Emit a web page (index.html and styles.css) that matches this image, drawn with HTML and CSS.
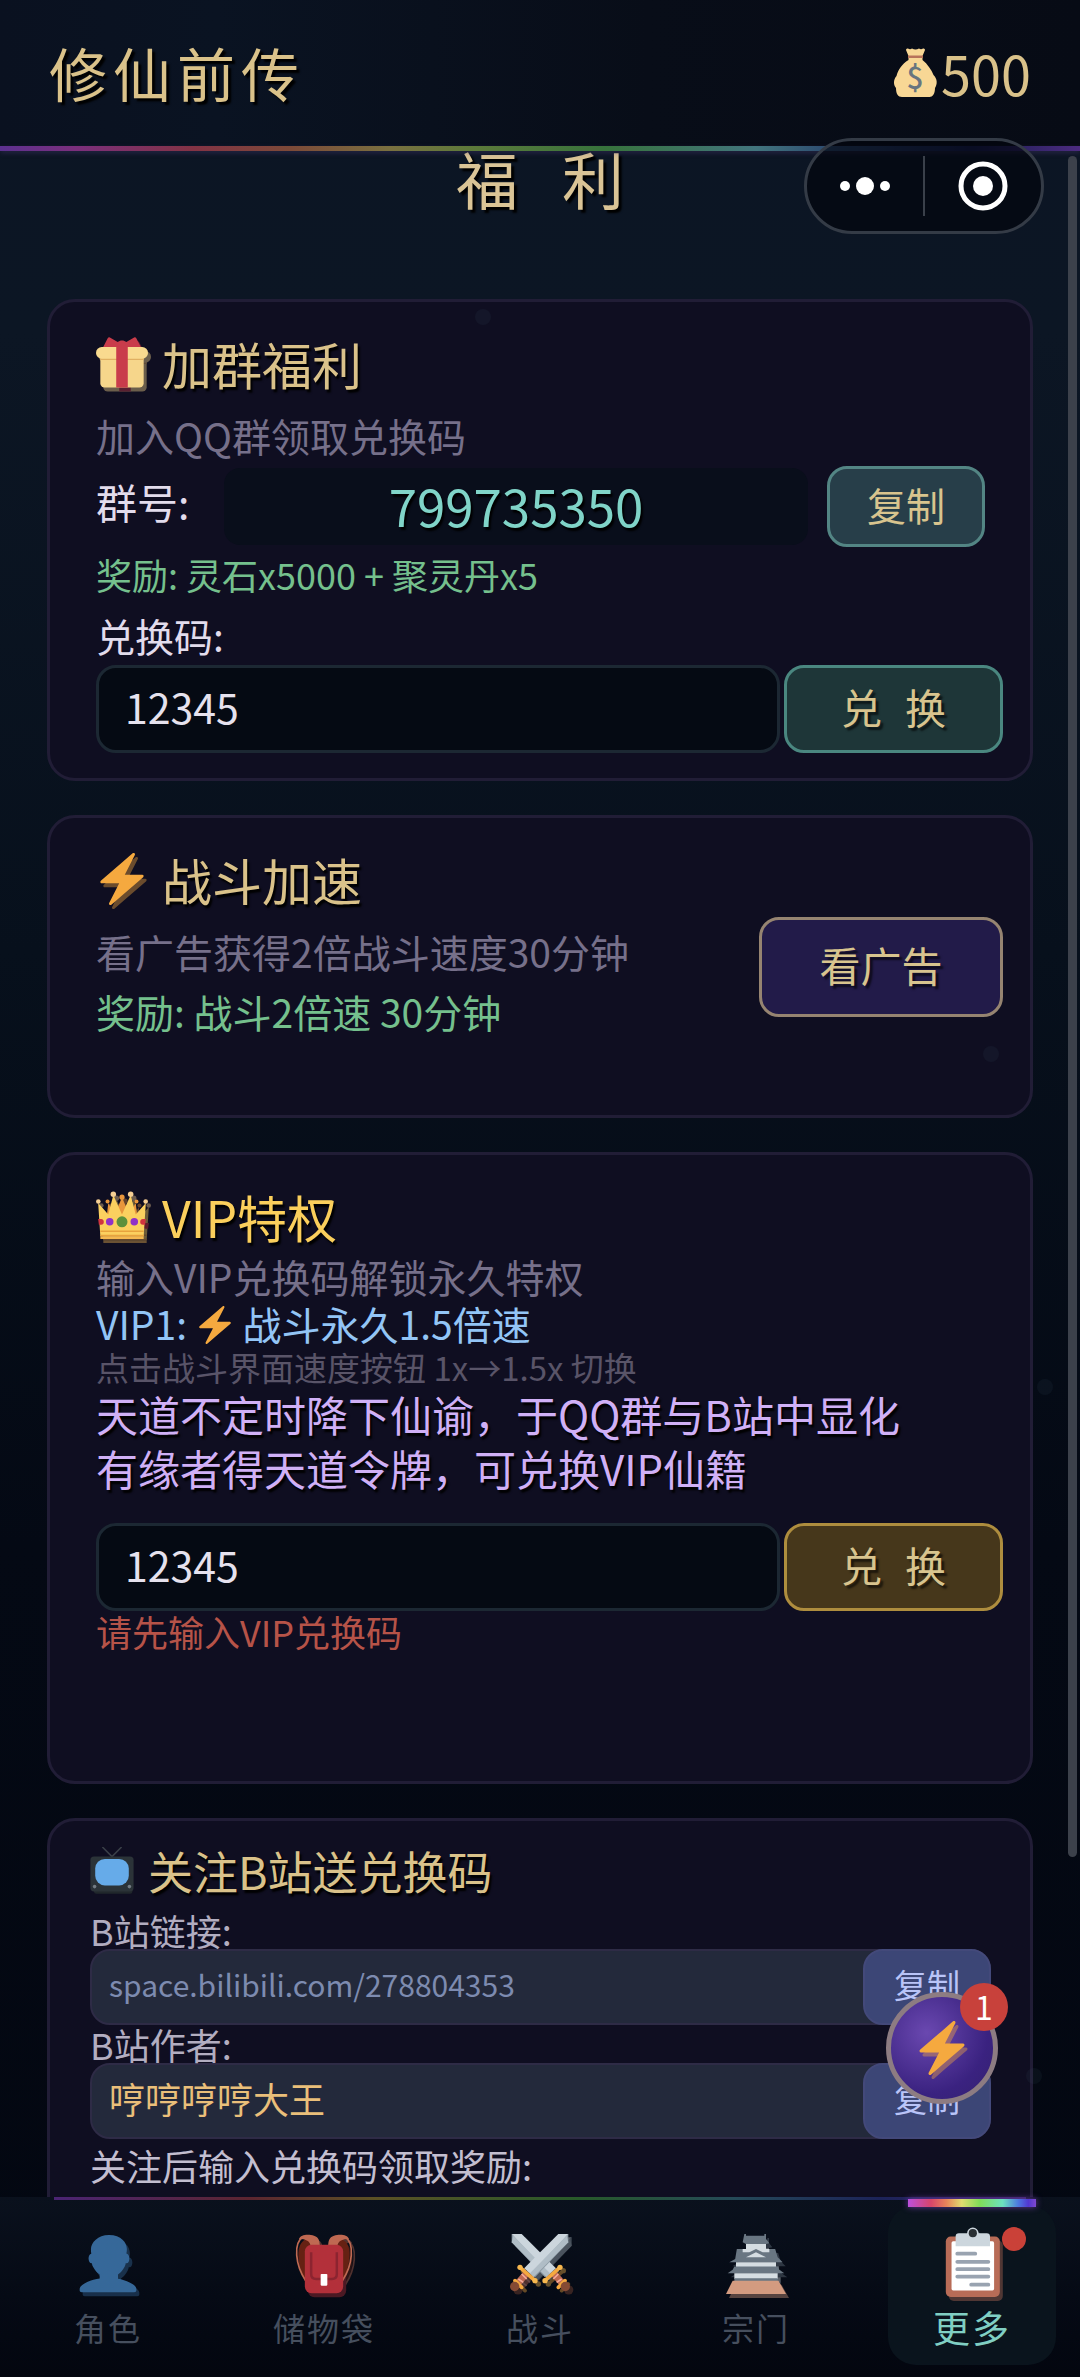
FILE: index.html
```
<!DOCTYPE html>
<html lang="zh-CN">
<head>
    <meta charset="UTF-8">
    <meta name="viewport" content="width=device-width, initial-scale=1.0">
    <title>修仙前传</title>
    <link rel="stylesheet" href="styles.css">
</head>
<body>
    <!-- shared icons -->
    <svg class="sprite" aria-hidden="true">
        <symbol id="bolt" viewBox="0 0 36 36">
            <path fill="#f5a93f" d="M32.938 15.651C32.792 15.26 32.418 15 32 15H19.925L26.89 1.458c.219-.426.106-.947-.271-1.243C26.437.071 26.218 0 26 0c-.233 0-.466.082-.653.243L18 6.588 3.347 19.243c-.316.273-.43.714-.284 1.105S3.582 21 4 21h12.075L9.11 34.542c-.219.426-.106.947.271 1.243.182.144.401.215.619.215.233 0 .466-.082.653-.243L18 29.412l14.653-12.655c.317-.273.43-.714.285-1.106z"/>
        </symbol>
        <symbol id="gift" viewBox="0 0 36 36">
            <path fill="#f6d68b" d="M3 12h30v20a3 3 0 0 1-3 3H6a3 3 0 0 1-3-3z"/>
            <path fill="#e0b062" d="M3 14h30v2H3z"/>
            <rect fill="#f9da8f" y="7" width="36" height="8" rx="4"/>
            <path fill="#c93c4b" d="M14 6h8v29h-8z"/>
            <path fill="#c93c4b" d="M5 7 8 1c.6-1 1.400-1 2.200-.3L15 3.500c1.500-1.500 4.500-1.500 6 0l4.800-2.800c.8-.7 1.600-.7 2.200.3l3 6z"/>
        </symbol>
        <symbol id="crown" viewBox="0 0 36 36">
            <path fill="#e8963c" d="M7 22 8.500 9l4.500 8 5-12 5 12 4.500-8L29 22z"/>
            <path fill="#fbd05f" d="M3 32 1.500 9l7 8L12 3.500 18 17l6-13.500L27.500 17l7-8L33 32z"/>
            <g fill="#f5cf94">
                <circle cx="1.600" cy="8" r="1.600"/><circle cx="12" cy="3" r="1.900"/><circle cx="24" cy="3" r="1.900"/><circle cx="34.400" cy="8" r="1.600"/>
            </g>
            <g fill="#e8963c">
                <circle cx="8" cy="8" r="1.400"/><circle cx="18" cy="5" r="1.800"/><circle cx="28" cy="8" r="1.400"/>
            </g>
            <path fill="#e8a33d" d="M3 28h30v1H3zM3 31h30v1H3z"/>
            <path fill="#f5b850" d="M3 32h30v2H3z"/>
            <circle fill="#5c913b" cx="18" cy="22" r="3.800"/>
            <circle fill="#9031c7" cx="9.500" cy="22" r="2.600"/><circle fill="#9031c7" cx="26.500" cy="22" r="2.600"/>
            <path fill="#d0343f" d="M1.500 20h1.800a2 2 0 0 1 .2 4H2zM34.500 20h-1.800a2 2 0 0 0-.2 4H34z"/>
        </symbol>
        <symbol id="tv" viewBox="0 0 36 40">
            <path fill="none" stroke="#3a3f48" stroke-width="1.300" d="m18 8-8-8M18 8l8-8"/>
            <path fill="#20272b" d="M3 34h32v3q0 2-2 2H5q-2 0-2-2z"/>
            <rect fill="#2b3338" y="8" width="36" height="29" rx="3"/>
            <rect fill="#66abe9" x="4" y="10" width="28" height="22" rx="8"/>
            <circle fill="#737c83" cx="3.500" cy="33" r="1.500"/><circle fill="#737c83" cx="32.500" cy="33" r="1.500"/>
        </symbol>
        <symbol id="person" viewBox="0 0 36 36">
            <path fill="#366899" d="M24 26.799v-2.566c2-1.348 4.080-3.779 4.703-6.896.186.103.206.17.413.17.991 0 1.709-1.287 1.709-2.873 0-1.562-.823-2.827-1.794-2.865.187-.674.293-1.577.293-2.735C29.324 5.168 26 .527 18.541.527c-6.629 0-10.777 4.641-10.777 8.507 0 1.123.069 2.043.188 2.755-.911.137-1.629 1.352-1.629 2.845 0 1.587.804 2.873 1.796 2.873.206 0 .025-.067.209-.17C8.952 20.453 11 22.885 13 24.232v2.414c-5 .645-12 3.437-12 6.230v1.061C1 35 2.076 35 3.137 35h29.725C33.924 35 35 35 35 33.938v-1.061c0-2.615-6-5.225-11-6.078z"/>
        </symbol>
        <symbol id="bag" viewBox="0 0 36 36">
            <path fill="#662113" d="M8 3C0 5 2 19 7 29l4-1V8zM28 3c8 2 6 16 1 26l-4-1V8z"/>
            <path fill="none" stroke="#bf6952" stroke-width="1" d="M7 28C1 19-1 5 6 1.500M29 28c6-9 8-23 1-26.500"/>
            <path fill="#bf6952" d="M3 3c1-3 6-3 9-2 3 1 3.500 3 3.500 7H10c0-4-3-5-7-5zM33 3c-1-3-6-3-9-2-3 1-3.500 3-3.500 7H26c0-4 3-5 7-5z"/>
            <rect fill="#b3303a" x="6.500" y="6.500" width="23" height="29" rx="4"/>
            <path fill="none" stroke="#8c2430" stroke-width="1.500" d="M10.300 11v13q0 3 3 3h9.400q3 0 3-3V11"/>
            <rect fill="#fff" x="16" y="24" width="4" height="7" rx=".5"/>
        </symbol>
        <symbol id="swords" viewBox="0 0 36 36">
            <g id="sword">
                <path fill="#8d9ba5" d="M35 0v5L15 26l-5-4z"/>
                <path fill="#ccd6dd" d="M29 0h6L12.500 24 8.500 20.500z"/>
                <path fill="#b0bdc6" d="m35 5-21 21-2-2.500L34 1z"/>
                <path stroke="#bf6952" stroke-width="4" d="m9.500 24-6 7"/>
                <path stroke="#f4ab9a" stroke-width="1" d="m7 24 3 3M5 27l3 2"/>
                <path stroke="#f5a93f" stroke-width="2.200" stroke-linecap="round" d="m6 20 9 8M3 28l4 4"/>
                <circle fill="#f7b84f" cx="6" cy="20" r="1.600"/><circle fill="#f7b84f" cx="15" cy="28" r="1.600"/>
                <circle fill="#854a34" cx="2.800" cy="31.500" r="2.800"/>
            </g>
        </symbol>
        <symbol id="castle" viewBox="0 0 36 36">
            <path fill="#697682" d="M11 0h1v1h11V0h1v3l2 2.500-2 .5H12l-2-1z"/>
            <path fill="#d5dde2" d="M12 6h12v5H12z"/>
            <path fill="#697682" d="M6.500 9h23L31 14l3 3H2l3.500-2z"/>
            <path fill="#d5dde2" d="M10 9h16v2h-4l-4-2-4 2h-4z"/>
            <path fill="#d5dde2" d="m12 14 6-3 6 3z"/>
            <path fill="#d5dde2" d="M6 17h24v3H6z"/>
            <path fill="#697682" d="M5 19.500h26l1 2 3 2H1l3-2z"/>
            <path fill="#d5dde2" d="M5 23.500h26V27H5z"/>
            <path fill="#697682" d="M5 26.500h26V29H5z"/>
            <path fill="#d39b80" d="M4 28h27.500L36 36H0z"/>
        </symbol>
        <symbol id="clipboard" viewBox="0 0 36 44">
            <rect fill="#b86c57" x="2" y="7" width="33" height="37" rx="3"/>
            <rect fill="#fff" x="5.500" y="10" width="26" height="30" rx="1"/>
            <path fill="#ccd6dd" d="M8 13V7a2 2 0 0 1 2-2h5a3.500 3.500 0 1 1 7 0h5a2 2 0 0 1 2 2v6z"/>
            <circle fill="#292f33" cx="18.500" cy="5" r="2.500"/>
            <path stroke="#99a3b0" stroke-width="2.300" stroke-linecap="round" d="M9 17.500h11M9 22.500h19M9 27h19M9 31.500h19M17.500 36.500H28"/>
        </symbol>
    </svg>

    <header class="topbar">
        <h1 class="game-name">修仙前传</h1>
        <div class="coins">
            <svg class="money" viewBox="0 0 43 49" aria-hidden="true">
                <path fill="#f8d795" d="M12 2q0-2 2-1.500 2 1.500 4 0 3.500 2 7 0 2 1.500 4 0 2-.5 2 1.500l-2.500 6v4c5 4 9 10 11 15 4 4 4 9 1.500 13 0 6-2.500 9-5.500 9H8c-4 0-6-3-6-9-2.500-3-3-8 .5-12C4 22 8 16 14.500 12V8z"/>
                <path fill="#b8735a" d="M14 7.500h15v2.500H14z"/>
                <text x="21" y="41" text-anchor="middle">$</text>
            </svg>
            <span>500</span>
        </div>
    </header>

    <main class="content">
        <h2 class="page-title">福 利</h2>

        <section class="card">
            <h3 class="card-title">
                <svg class="icon" aria-hidden="true"><use class="ghost" href="#gift" x="3" y="4"/><use href="#gift"/></svg>
                加群福利
            </h3>
            <p class="desc">加入QQ群领取兑换码</p>
            <div class="group-row">
                <span class="group-label">群号:</span>
                <span class="group-number">799735350</span>
                <button class="btn btn-copy" type="button">复制</button>
            </div>
            <p class="reward small">奖励: 灵石x5000 + 聚灵丹x5</p>
            <label class="code-label" for="groupCode">兑换码:</label>
            <div class="code-row">
                <input class="code-input" type="text" id="groupCode" value="12345">
                <button class="btn btn-redeem" type="button">兑 换</button>
            </div>
        </section>

        <section class="card speed-card">
            <div class="speed-info">
                <h3 class="card-title">
                    <svg class="icon" aria-hidden="true"><use class="ghost" href="#bolt" x="3" y="4"/><use href="#bolt"/></svg>
                    战斗加速
                </h3>
                <p class="desc">看广告获得2倍战斗速度30分钟</p>
                <p class="reward">奖励: 战斗2倍速 30分钟</p>
            </div>
            <button class="btn btn-ad" type="button">看广告</button>
        </section>

        <section class="card vip-card">
            <h3 class="card-title vip-title">
                <svg class="icon" aria-hidden="true"><use class="ghost" href="#crown" x="3" y="4"/><use href="#crown"/></svg>
                VIP特权
            </h3>
            <p class="vip-desc">输入VIP兑换码解锁永久特权</p>
            <p class="vip-level">VIP1: <svg class="icon-inline" aria-hidden="true"><use href="#bolt"/></svg> 战斗永久1.5倍速</p>
            <p class="vip-hint">点击战斗界面速度按钮 1x→1.5x 切换</p>
            <p class="oracle">天道不定时降下仙谕，于QQ群与B站中显化<br>有缘者得天道令牌，可兑换VIP仙籍</p>
            <div class="code-row">
                <input class="code-input" type="text" id="vipCode" value="12345" aria-label="VIP兑换码">
                <button class="btn btn-redeem btn-gold" type="button">兑 换</button>
            </div>
            <p class="error">请先输入VIP兑换码</p>
        </section>

        <section class="card bili-card">
            <h3 class="card-title bili-title">
                <svg class="icon" aria-hidden="true"><use href="#tv"/></svg>
                关注B站送兑换码
            </h3>
            <p class="bili-label">B站链接:</p>
            <div class="bili-row">
                <a class="bili-link" href="https://space.bilibili.com/278804353">space.bilibili.com/278804353</a>
                <button class="btn-bili" type="button">复制</button>
            </div>
            <p class="bili-label">B站作者:</p>
            <div class="bili-row">
                <span class="bili-author">哼哼哼哼大王</span>
                <button class="btn-bili" type="button">复制</button>
            </div>
            <p class="bili-tip">关注后输入兑换码领取奖励:</p>
        </section>

        <div class="scrollbar"></div>
    </main>

    <nav class="tabs">
        <a class="tab" href="#role">
            <svg class="tab-icon" aria-hidden="true"><use class="ghost" href="#person" x="3" y="4"/><use href="#person"/></svg>
            <span>角色</span>
        </a>
        <a class="tab" href="#storage">
            <svg class="tab-icon" aria-hidden="true"><use class="ghost" href="#bag" x="3" y="4"/><use href="#bag"/></svg>
            <span>储物袋</span>
        </a>
        <a class="tab" href="#battle">
            <svg class="tab-icon" viewBox="0 0 36 36" aria-hidden="true">
                <g class="ghost"><use href="#sword" transform="translate(38 2) scale(-1 1)"/><use href="#sword" x="2" y="2"/></g>
                <use href="#sword" transform="translate(36 0) scale(-1 1)"/><use href="#sword"/>
            </svg>
            <span>战斗</span>
        </a>
        <a class="tab" href="#sect">
            <svg class="tab-icon" aria-hidden="true"><use class="ghost" href="#castle" x="3" y="4"/><use href="#castle"/></svg>
            <span>宗门</span>
        </a>
        <a class="tab active" href="#more">
            <svg class="tab-icon" aria-hidden="true"><use class="ghost" href="#clipboard" x="3" y="4"/><use href="#clipboard"/></svg>
            <span>更多</span>
            <i class="dot"></i>
        </a>
    </nav>

    <!-- drifting spirit motes -->
    <div class="motes" aria-hidden="true">
        <i style="left: 44%; top: 13%"></i>
        <i style="left: 96%; top: 58%"></i>
        <i style="left: 91%; top: 44%"></i>
        <i style="left: 95%; top: 87%"></i>
    </div>

    <!-- mini program capsule -->
    <div class="capsule">
        <button type="button" aria-label="菜单">
            <svg width="52" height="20" viewBox="0 0 52 20"><g fill="#fff"><circle cx="6" cy="10" r="5"/><circle cx="26" cy="10" r="9"/><circle cx="46" cy="10" r="5"/></g></svg>
        </button>
        <button type="button" aria-label="关闭">
            <svg width="50" height="50" viewBox="0 0 50 50"><circle cx="25" cy="25" r="22" fill="none" stroke="#fff" stroke-width="5"/><circle cx="25" cy="25" r="10" fill="#fff"/></svg>
        </button>
    </div>

    <button class="fab" type="button" aria-label="加速">
        <svg class="fab-icon" aria-hidden="true"><use class="ghost" href="#bolt" x="3" y="4"/><use href="#bolt"/></svg>
        <span class="badge">1</span>
    </button>
</body>
</html>
```
FILE: styles.css
```
* {
    box-sizing: border-box;
}
body {
    font-family: "Noto Sans CJK SC", "Noto Sans", sans-serif;
    margin: 0;
    height: 100vh;
    display: flex;
    flex-direction: column;
    position: relative;
    overflow: hidden;
    background: linear-gradient(#0c1524 0%, #0c1624 14%, #07101c 40%, #040914 65%, #030711 100%);
    color: #e2dcec;
}
h1, h2, h3, p {
    margin: 0;
    font-weight: 400;
}
button, input {
    font-family: inherit;
    margin: 0;
}
button {
    cursor: pointer;
}
a {
    text-decoration: none;
}
.sprite {
    position: absolute;
    width: 0;
    height: 0;
}
svg {
    overflow: visible;
    flex: none;
}
.ghost {
    opacity: 0.4;
}

/* top bar */
.topbar {
    display: flex;
    justify-content: space-between;
    align-items: center;
    height: 148px;
    padding: 0 49px 4px;
    flex: none;
    position: relative;
    z-index: 1;
    background: linear-gradient(90deg, #0a1120, #0a1322 20%, #080d18 60%, #070b15);
}
.topbar::after {
    content: "";
    position: absolute;
    left: 0;
    right: 0;
    bottom: -3px;
    height: 5px;
    background: linear-gradient(90deg, #5c3190, #7b2f7c 7%, #833344 18%, #7c4a38 27%, #7a7040 36%, #5c7a3a 44%, #37733c 56%, #42757e 70%, #2c4a70 77%, #171d4e 90%, #4c2b80);
    box-shadow: 0 2px 5px rgba(80, 60, 120, 0.4);
}
.game-name {
    font-size: 58px;
    letter-spacing: 6px;
    color: #dac28a;
    text-shadow: 3px 3px 2px #000;
}
.coins {
    display: flex;
    align-items: center;
    font-size: 54px;
    color: #dac28a;
}
.money {
    width: 43px;
    height: 49px;
    margin-right: 4px;
}
.money text {
    font-size: 30px;
    font-weight: 500;
    fill: #67757f;
}

/* content */
.content {
    flex: 1;
    min-height: 0;
    overflow: hidden;
    position: relative;
    padding: 0 47px;
}
.page-title {
    font-size: 62px;
    line-height: 60px;
    letter-spacing: 15px;
    text-indent: 15px;
    text-align: center;
    color: #dac496;
    text-shadow: 3px 3px 2px #000;
    margin-bottom: 91px;
}
.scrollbar {
    position: absolute;
    top: 8px;
    right: 3px;
    width: 9px;
    height: 83%;
    border-radius: 5px;
    background: #3c414b;
}
.card {
    border: 3px solid #211d36;
    border-radius: 28px;
    background: #0f0e21;
    padding: 31px 27px 25px 46px;
    margin-bottom: 34px;
}
.card-title {
    display: flex;
    align-items: center;
    gap: 14px;
    font-size: 50px;
    line-height: 60px;
    color: #dac28a;
    text-shadow: 2px 3px 2px #000;
    margin-bottom: 17px;
}
.icon {
    width: 52px;
    height: 52px;
}
.desc {
    font-size: 39px;
    line-height: 50px;
    color: #76708a;
}
.reward {
    font-size: 39px;
    line-height: 50px;
    color: #75c08d;
}
.reward.small {
    font-size: 36px;
    margin-top: 2px;
}
.btn {
    border: 3px solid;
    border-radius: 20px;
    padding: 0 0 6px;
    color: #d8c48e;
    text-shadow: 3px 3px 2px rgba(0, 0, 0, 0.6);
    flex: none;
}
.group-row {
    display: flex;
    margin: 6px 18px 0 0;
}
.group-label {
    width: 128px;
    font-size: 41px;
    line-height: 70px;
}
.group-number {
    flex: 1;
    margin: 2px 19px 2px 0;
    border-radius: 16px;
    background: #090e1b;
    font-size: 51px;
    line-height: 75px;
    text-align: center;
    color: #80d4c8;
    text-shadow: 2px 3px 2px #000;
}
.btn-copy {
    width: 158px;
    height: 81px;
    font-size: 39px;
    background: #273e49;
    border-color: #538584;
    text-shadow: none;
}
.code-label {
    display: block;
    font-size: 39px;
    line-height: 60px;
    margin-top: 6px;
}
.code-row {
    display: flex;
    gap: 4px;
}
.code-input {
    flex: 1;
    min-width: 0;
    height: 88px;
    border: 3px solid #1c2833;
    border-radius: 20px;
    background: #050a13;
    color: #e6e2ee;
    font-size: 41px;
    padding: 0 26px 6px;
    outline: none;
}
.btn-redeem {
    width: 219px;
    height: 88px;
    font-size: 41px;
    letter-spacing: 7px;
    text-indent: 7px;
    background: #1e3638;
    border-color: #4a8780;
}
.btn-gold {
    background: #46371b;
    border-color: #ae8d3e;
}

/* battle speed */
.speed-card {
    display: flex;
    justify-content: space-between;
    align-items: center;
    padding-bottom: 31px;
}
.speed-info {
    padding-bottom: 48px;
}
.speed-info .reward {
    margin-top: 10px;
}
.btn-ad {
    width: 244px;
    height: 100px;
    font-size: 41px;
    background: #221b49;
    border-color: #968471;
}

/* vip */
.vip-card {
    padding-bottom: 130px;
}
.vip-title {
    color: #fbcf5c;
    margin-bottom: 7px;
}
.vip-desc {
    font-size: 39px;
    line-height: 46px;
    color: #76708a;
}
.vip-level {
    font-size: 39px;
    line-height: 48px;
    color: #93c5f6;
}
.icon-inline {
    width: 38px;
    height: 38px;
    vertical-align: -4px;
}
.vip-hint {
    font-size: 33px;
    line-height: 40px;
    color: #595468;
}
.oracle {
    font-size: 42px;
    line-height: 54px;
    color: #d0b0f6;
    text-shadow: 2px 3px 2px #000;
    margin-bottom: 28px;
}
.error {
    font-size: 36px;
    line-height: 40px;
    color: #b65348;
}

/* bilibili */
.bili-card {
    padding: 23px 39px 120px 40px;
}
.bili-title {
    font-size: 45px;
    line-height: 54px;
    margin-bottom: 13px;
}
.bili-title .icon {
    width: 44px;
    height: 48px;
}
.bili-label {
    font-size: 36px;
    line-height: 38px;
    color: #b2adc0;
}
.bili-row {
    display: flex;
    align-items: center;
    justify-content: space-between;
    height: 76px;
    border: 2px solid #2e2b46;
    border-radius: 20px;
    background: #23293b;
    padding-left: 17px;
}
.bili-link,
.bili-author {
    padding-bottom: 6px;
}
.bili-link {
    font-size: 30px;
    color: #7d8bb0;
}
.bili-author {
    font-size: 36px;
    color: #eabf7a;
}
.btn-bili {
    width: 128px;
    height: 76px;
    margin-right: -2px;
    border: 2px solid #43497a;
    border-radius: 20px;
    padding: 0 0 6px;
    background: #3c4676;
    color: #b9c4f8;
    font-size: 33px;
}
.bili-tip {
    font-size: 36px;
    line-height: 52px;
    color: #c3bed0;
}

/* bottom tabs */
.tabs {
    display: grid;
    grid-template-columns: repeat(5, 1fr);
    height: 180px;
    flex: none;
    position: relative;
    background: linear-gradient(#0a111d, #050a15 55%, #03060f);
}
.tabs::before {
    content: "";
    position: absolute;
    left: 5%;
    right: 5%;
    top: 0;
    height: 3px;
    background: linear-gradient(90deg, #4b2474, #5c2530 20%, #5c5125 33%, #285a2a 54%, #254a58 70%, #1c2358 85%, #3a2268);
}
.tab {
    display: flex;
    flex-direction: column;
    align-items: center;
    position: relative;
    margin: 8px 24px 12px;
    padding-top: 28px;
    border-radius: 28px;
    color: #464f5e;
    font-size: 32px;
    line-height: 40px;
    letter-spacing: 2px;
}
.tab-icon {
    width: 60px;
    height: 62px;
    margin-bottom: 12px;
}
.tab.active {
    background: #0a141d;
    color: #80cfc3;
    font-size: 37px;
    padding-top: 20px;
}
.tab.active .tab-icon {
    height: 72px;
    margin-bottom: 10px;
}
.tab.active::before {
    content: "";
    position: absolute;
    top: -6px;
    left: 20px;
    right: 20px;
    height: 8px;
    background: linear-gradient(90deg, #bb50dd, #d8456a 18%, #e8835a 30%, #e0dc70 42%, #80dc58 56%, #6ce0c0 74%, #4d7ae0 86%, #5238d0 94%, #8048d0);
    box-shadow: 0 0 6px #6a3aa0;
}
.dot {
    position: absolute;
    top: 22px;
    right: 30px;
    width: 24px;
    height: 24px;
    border-radius: 50%;
    background: #ca4138;
}

/* floating parts */
.motes i {
    position: absolute;
    width: 16px;
    height: 16px;
    border-radius: 50%;
    background: rgba(60, 80, 100, 0.12);
}
.capsule {
    position: absolute;
    z-index: 2;
    top: 138px;
    right: 36px;
    width: 240px;
    height: 96px;
    display: flex;
    align-items: center;
    border: 3px solid #343b46;
    border-radius: 48px;
    background: rgba(2, 5, 12, 0.65);
}
.capsule button {
    flex: 1;
    height: 60px;
    display: flex;
    align-items: center;
    justify-content: center;
    padding: 0;
    border: none;
    background: none;
}
.capsule button + button {
    border-left: 2px solid #3a404a;
}
.fab {
    position: absolute;
    z-index: 2;
    right: 82px;
    bottom: 273px;
    width: 112px;
    height: 112px;
    padding: 0;
    display: flex;
    align-items: center;
    justify-content: center;
    border: 5px solid #8d7c82;
    border-radius: 50%;
    background: radial-gradient(circle at 35% 35%, #6a48b0, #3a2280 65%, #33206f);
}
.fab-icon {
    width: 54px;
    height: 54px;
}
.badge {
    position: absolute;
    top: -14px;
    right: -15px;
    width: 48px;
    height: 48px;
    border-radius: 50%;
    background: #c8413b;
    color: #fff;
    font-size: 32px;
    line-height: 46px;
    text-align: center;
}
```
